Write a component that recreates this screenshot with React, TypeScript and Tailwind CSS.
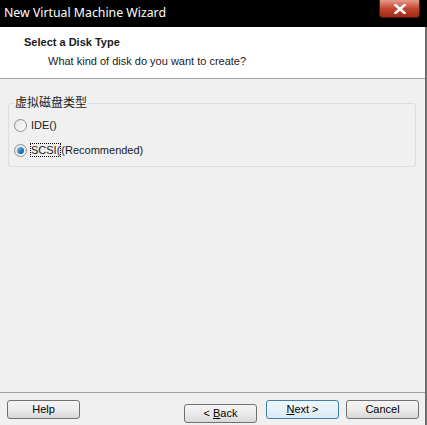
import React from "react";

const Radio: React.FC<{ checked?: boolean }> = ({ checked }) => (
  <span className="relative inline-flex h-[13px] w-[13px] shrink-0 items-center justify-center rounded-full border border-[#8f8f8f] bg-gradient-to-br from-[#e6e6e6] to-[#fbfbfb]">
    {checked && (
      <span className="h-[7px] w-[7px] rounded-full bg-gradient-to-br from-[#8ad0f5] via-[#2a86c7] to-[#0d4f8e]" />
    )}
  </span>
);

const Btn: React.FC<{ children: React.ReactNode; primary?: boolean }> = ({ children, primary }) => (
  <button
    type="button"
    className={
      "h-[19px] w-[73px] rounded-[3px] border text-[11px] leading-none text-black " +
      (primary
        ? "border-[#3c7fb1] bg-gradient-to-b from-[#f0f8fd] to-[#dbe9f2]"
        : "border-[#707070] bg-gradient-to-b from-[#f4f4f4] via-[#ececec] to-[#d8d8d8]")
    }
  >
    {children}
  </button>
);

export default function App() {
  return (
    <div className="flex h-[425px] w-[427px] flex-col bg-[#f0f0f0] font-['Liberation_Sans','Noto_Sans_CJK_SC',sans-serif] text-[#1a1a1a]">
      {/* ----- caption ----- */}
      <div className="relative flex h-[27px] items-center bg-black pl-[4px]">
        <span className="font-['Noto_Sans',sans-serif] text-[12.3px] text-white">New Virtual Machine Wizard</span>
        <div className="absolute right-[7px] top-0 flex h-[18px] w-[41px] items-center justify-center rounded-b-[4px] border border-t-0 border-[#5a1a12] bg-gradient-to-b from-[#e59a8a] via-[#c4452f] to-[#a02a18]">
          <svg width="12" height="10" viewBox="0 0 12 10">
            <path d="M1.5 1 L10.5 9 M10.5 1 L1.5 9" stroke="#fff" strokeWidth="2.6" strokeLinecap="square" />
          </svg>
        </div>
      </div>

      <div className="flex flex-1 flex-col border-r-2 border-[#6e6e6e]">
        {/* ----- header ----- */}
        <div className="flex h-[52px] flex-col border-b border-[#a0a0a0] bg-white pl-[24px] pt-[7px] text-[11px]">
          <div className="font-bold">Select a Disk Type</div>
          <div className="pl-[24px] pt-[2px]">What kind of disk do you want to create?</div>
        </div>

        {/* ----- body ----- */}
        <div className="flex-1 px-[8px] pt-[24px]">
          <div className="relative h-[64px] w-[408px] rounded-[3px] border border-[#d5dfe5]">
            <span className="absolute left-[5px] top-[-9px] bg-[#f0f0f0] px-[1px] text-[12px] leading-[16px]">虚拟磁盘类型</span>
            <div className="flex flex-col gap-[12px] pl-[5px] pt-[15px] text-[11px] leading-[13px]">
              <label className="flex h-[13px] items-center gap-[4px]">
                <Radio />
                <span>IDE()</span>
              </label>
              <label className="flex h-[13px] items-center gap-[3px]">
                <Radio checked />
                <span>
                  <span className="border border-dotted border-black">SCSI(</span>(Recommended)
                </span>
              </label>
            </div>
          </div>
        </div>

        {/* ----- footer ----- */}
        <div className="flex h-[33px] items-start border-t border-[#a0a0a0] pl-[7px] pt-[7px]">
          <Btn>Help</Btn>
          <div className="ml-auto flex gap-[7px] pr-[6px]">
            <div className="mr-[2px]">
              <Btn>
                &lt; <u>B</u>ack
              </Btn>
            </div>
            <Btn primary>
              <u>N</u>ext &gt;
            </Btn>
            <Btn>Cancel</Btn>
          </div>
        </div>
      </div>
    </div>
  );
}
